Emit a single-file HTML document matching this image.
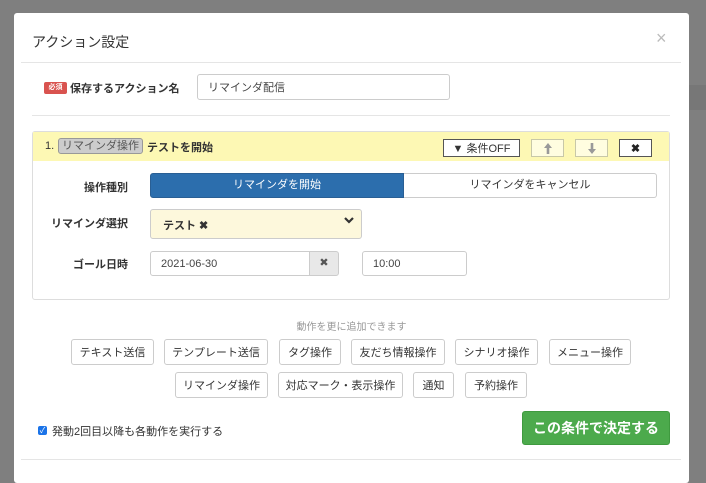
<!DOCTYPE html>
<html><head><meta charset="utf-8"><style>
*{box-sizing:border-box;margin:0;padding:0}
body{width:706px;height:478px;background:#7f7f7f;position:relative;overflow:hidden;font-family:"Liberation Sans","Noto Sans CJK JP",sans-serif;color:#333;font-size:11px}
.a{position:absolute}
.modal{left:14px;top:13px;width:675px;height:470px;background:#fff;border-radius:3px}
.btn{position:absolute;border:1px solid #ccc;border-radius:3px;background:#fff;font-size:11px;display:flex;align-items:center;justify-content:center;color:#333}
.inp{position:absolute;border:1px solid #ccc;border-radius:3px;background:#fff;font-size:11px;display:flex;align-items:center;padding-left:10px;color:#444}
.lbl{position:absolute;font-size:11px;font-weight:bold;text-align:right;width:120px}
.hb{position:absolute;top:139px;height:18px;border:1px solid #c8c8a8;background:#fffde0;display:flex;align-items:center;justify-content:center;font-size:11px;color:#999}
</style></head><body>
<div class="a" style="left:689px;top:85px;width:17px;height:25px;background:#777"></div>
<div class="a modal"></div>
<div class="a" style="left:32px;top:32px;font-size:14px;color:#333">アクション設定</div>
<div class="a" style="left:656px;top:28px;font-size:18px;color:#bbb">×</div>
<div class="a" style="left:21px;top:62px;width:660px;height:1px;background:#e5e5e5"></div>
<div class="a" style="left:44px;top:82px;width:23px;height:12px;background:#d9534f;border-radius:2px;color:#fff;font-size:7px;font-weight:bold;text-align:center;line-height:12px">必須</div>
<div class="a" style="left:70px;top:80px;font-size:11px;font-weight:bold">保存するアクション名</div>
<div class="inp" style="left:197px;top:74px;width:253px;height:26px">リマインダ配信</div>
<div class="a" style="left:32px;top:115px;width:638px;height:1px;background:#e5e5e5"></div>
<div class="a" style="left:32px;top:131px;width:638px;height:169px;border:1px solid #ddd;border-radius:3px"></div>
<div class="a" style="left:33px;top:132px;width:636px;height:29px;background:#fdf8b4"></div>
<div class="a" style="left:45px;top:140px;font-size:11px">1.</div>
<div class="a" style="left:58px;top:138px;width:85px;height:16px;background:#ccc;border:1px solid #999;border-radius:3px;font-size:11px;color:#555;text-align:center;line-height:14px">リマインダ操作</div>
<div class="a" style="left:147px;top:139px;font-size:11px;font-weight:bold">テストを開始</div>
<div class="hb" style="left:443px;width:77px;background:#fff;border-color:#555;color:#333">▼ 条件OFF</div>
<div class="hb" style="left:531px;width:33px"><svg width="8" height="11" viewBox="0 0 8 11"><path d="M4 0L8 5H5.3V11H2.7V5H0Z" fill="#999"/></svg></div>
<div class="hb" style="left:575px;width:33px"><svg width="8" height="11" viewBox="0 0 8 11"><path d="M4 11L8 6H5.3V0H2.7V6H0Z" fill="#999"/></svg></div>
<div class="hb" style="left:619px;width:33px;background:#fff;border-color:#555;color:#222;font-weight:bold">✖</div>
<div class="lbl" style="left:8px;top:179px">操作種別</div>
<div class="a" style="left:150px;top:173px;width:254px;height:25px;background:#2c6ead;border:1px solid #2a5f94;border-radius:3px 0 0 3px;color:#fff;text-align:center;line-height:23px">リマインダを開始</div>
<div class="a" style="left:404px;top:173px;width:253px;height:25px;background:#fff;border:1px solid #ccc;border-left:none;border-radius:0 3px 3px 0;text-align:center;line-height:23px">リマインダをキャンセル</div>
<div class="lbl" style="left:8px;top:215px">リマインダ選択</div>
<div class="a" style="left:150px;top:209px;width:212px;height:30px;background:#fdf8dc;border:1px solid #ccc;border-radius:3px"></div>
<div class="a" style="left:163px;top:217px;font-weight:bold">テスト ✖</div>
<svg class="a" style="left:344px;top:217px" width="10" height="7" viewBox="0 0 10 7"><path d="M1 1L5 5L9 1" stroke="#333" stroke-width="2.2" fill="none"/></svg>
<div class="lbl" style="left:8px;top:256px">ゴール日時</div>
<div class="inp" style="left:150px;top:251px;width:160px;height:25px;border-radius:3px 0 0 3px">2021-06-30</div>
<div class="a" style="left:309px;top:251px;width:30px;height:25px;background:#e8e8e8;border:1px solid #ccc;border-radius:0 3px 3px 0;text-align:center;line-height:23px;color:#555">✖</div>
<div class="inp" style="left:362px;top:251px;width:105px;height:25px">10:00</div>
<div class="a" style="left:0;width:706px;top:318px;text-align:center;font-size:10px;color:#999;padding-right:3px">動作を更に追加できます</div>
<div class="btn" style="left:71px;top:339px;width:83px;height:26px">テキスト送信</div>
<div class="btn" style="left:164px;top:339px;width:104px;height:26px">テンプレート送信</div>
<div class="btn" style="left:279px;top:339px;width:62px;height:26px">タグ操作</div>
<div class="btn" style="left:351px;top:339px;width:94px;height:26px">友だち情報操作</div>
<div class="btn" style="left:455px;top:339px;width:83px;height:26px">シナリオ操作</div>
<div class="btn" style="left:549px;top:339px;width:82px;height:26px">メニュー操作</div>
<div class="btn" style="left:175px;top:372px;width:93px;height:26px">リマインダ操作</div>
<div class="btn" style="left:278px;top:372px;width:125px;height:26px">対応マーク・表示操作</div>
<div class="btn" style="left:413px;top:372px;width:41px;height:26px">通知</div>
<div class="btn" style="left:465px;top:372px;width:62px;height:26px">予約操作</div>
<div class="a" style="left:38px;top:426px;width:9px;height:9px;background:#1a73e8;border-radius:2px;color:#fff;font-size:8px;line-height:9px;text-align:center">✓</div>
<div class="a" style="left:52px;top:423px;font-size:11px">発動2回目以降も各動作を実行する</div>
<div class="a" style="left:522px;top:411px;width:148px;height:34px;background:#4caa4c;border:1px solid #3f9a3f;border-radius:3px;color:#fff;font-size:14px;font-weight:bold;text-align:center;line-height:32px">この条件で決定する</div>
<div class="a" style="left:21px;top:459px;width:660px;height:1px;background:#e5e5e5"></div>
</body></html>
